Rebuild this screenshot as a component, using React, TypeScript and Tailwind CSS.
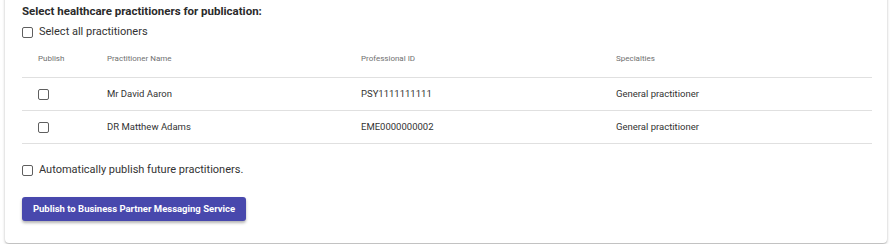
import React from "react";

function Box() {
  return <span className="inline-block w-[11px] h-[11px] border-[1.5px] border-[#5f5f5f] rounded-[2px] bg-white shrink-0" />;
}

const rows = [
  { name: "Mr David Aaron", id: "PSY1111111111", spec: "General practitioner" },
  { name: "DR Matthew Adams", id: "EME0000000002", spec: "General practitioner" },
];

export default function App() {
  return (
    <div className="w-[892px] h-[244px] bg-white overflow-hidden px-[5px]" style={{ fontFamily: "Roboto, 'Liberation Sans', sans-serif" }}>
      <div className="-mt-[10px] pt-[14px] pb-[22px] pl-[17px] pr-[15px] bg-white rounded-[4px] shadow-[0_1px_3px_rgba(0,0,0,0.25),0_1px_1px_rgba(0,0,0,0.1)]">
        <div className="text-[11.5px] font-bold text-[#2b2b2b] leading-[14px]">Select healthcare practitioners for publication:</div>
        <label className="flex items-center gap-[6px] mt-[5px] h-[18px]">
          <Box />
          <span className="text-[11px] text-[#333]">Select all practitioners</span>
        </label>
        <div className="-mt-[1px]">
          <div className="flex items-center h-[38px] border-b border-[#e0e0e0] text-[8px] text-[#707070]">
            <div className="w-[85px] pl-[16px]">Publish</div>
            <div className="w-[254px]">Practitioner Name</div>
            <div className="w-[255px]">Professional ID</div>
            <div className="flex-1">Specialties</div>
          </div>
          {rows.map((r) => (
            <div key={r.id} className="flex items-center h-[33px] border-b border-[#e0e0e0] text-[9.5px] text-[#333]">
              <div className="w-[85px] pl-[16px] flex items-center"><Box /></div>
              <div className="w-[254px]">{r.name}</div>
              <div className="w-[255px]">{r.id}</div>
              <div className="flex-1">{r.spec}</div>
            </div>
          ))}
        </div>
        <label className="flex items-center gap-[6px] mt-[17px] h-[18px]">
          <Box />
          <span className="text-[11px] text-[#333]">Automatically publish future practitioners.</span>
        </label>
        <button className="mt-[18px] h-[24px] w-[224px] bg-[#4848ad] text-white text-[9.5px] font-bold rounded-[3px] shadow-[0_2px_3px_rgba(0,0,0,0.3)]">
          Publish to Business Partner Messaging Service
        </button>
      </div>
    </div>
  );
}
